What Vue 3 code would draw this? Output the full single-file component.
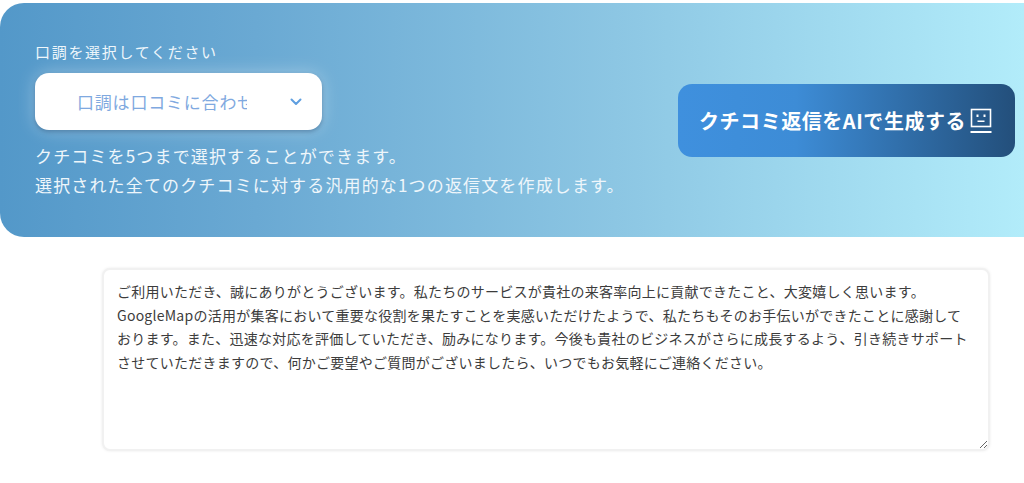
<script setup>
const reply = 'ご利用いただき、誠にありがとうございます。私たちのサービスが貴社の来客率向上に貢献できたこと、大変嬉しく思います。GoogleMapの活用が集客において重要な役割を果たすことを実感いただけたようで、私たちもそのお手伝いができたことに感謝しております。また、迅速な対応を評価していただき、励みになります。今後も貴社のビジネスがさらに成長するよう、引き続きサポートさせていただきますので、何かご要望やご質問がございましたら、いつでもお気軽にご連絡ください。'
</script>

<template>
  <div class="page">
    <section class="banner">
      <div class="left">
        <div class="label">口調を選択してください</div>
        <div class="select">
          <span class="select-text">口調は口コミに合わせる</span>
          <svg class="chevron" viewBox="0 0 12 8" width="12" height="8">
            <path d="M1.5 1.5 6 6l4.500-4.500" fill="none" stroke="#5f9fe0" stroke-width="2" stroke-linecap="round" stroke-linejoin="round" />
          </svg>
        </div>
        <p class="note">クチコミを5つまで選択することができます。<br />選択された全てのクチコミに対する汎用的な1つの返信文を作成します。</p>
      </div>
      <button class="generate" type="button">
        <span>クチコミ返信をAIで生成する</span>
        <svg class="robot" viewBox="0 0 22 26" width="22" height="26">
          <rect x="1.500" y="1.500" width="19" height="17" fill="none" stroke="#fff" stroke-width="1.600" />
          <rect x="6.500" y="6.500" width="2" height="2.500" fill="#fff" />
          <rect x="13.500" y="6.500" width="2" height="2.500" fill="#fff" />
          <rect x="7.500" y="12.500" width="7" height="1.500" fill="#fff" />
          <rect x="0.500" y="23" width="21" height="2" fill="#fff" />
        </svg>
      </button>
    </section>
    <div class="reply-wrap">
      <textarea class="reply" :value="reply"></textarea>
    </div>
  </div>
</template>

<style scoped>
.page {
  width: 1024px;
  height: 483px;
  padding-top: 3px;
  box-sizing: border-box;
  background: #fff;
  overflow: hidden;
  font-family: "Noto Sans CJK JP", "Noto Sans", sans-serif;
}
.banner {
  height: 234px;
  box-sizing: border-box;
  display: flex;
  align-items: flex-start;
  justify-content: space-between;
  padding: 0 9px 0 35px;
  border-radius: 24px 0 0 24px;
  background: linear-gradient(90deg, #5398c9 0%, #6aa9d3 25%, #8cc6e3 60%, #b2ecfa 100%);
}
.left {
  padding-top: 38px;
  color: #fff;
}
.label {
  font-size: 15px;
  line-height: 22px;
  letter-spacing: 1.7px;
  color: #eef6fb;
}
.select {
  width: 287px;
  height: 57px;
  margin-top: 10px;
  box-sizing: border-box;
  padding: 0 20px 0 42px;
  display: flex;
  align-items: center;
  justify-content: space-between;
  border-radius: 14px;
  background: #fff;
  box-shadow: 0 2px 4px rgba(40, 80, 120, 0.45), 0 0 18px rgba(255, 255, 255, 0.35);
}
.select-text {
  width: 170px;
  margin-top: -1px;
  overflow: hidden;
  white-space: nowrap;
  font-size: 17px;
  letter-spacing: 0.8px;
  color: #7fa9e0;
}
.note {
  margin: 11px 0 0;
  font-size: 17px;
  line-height: 29px;
  letter-spacing: 1.15px;
  color: #eef6fb;
  white-space: nowrap;
}
.generate {
  width: 337px;
  height: 73px;
  margin-top: 81px;
  padding: 0 0 0 21px;
  display: flex;
  align-items: center;
  justify-content: flex-start;
  gap: 4px;
  border: 0;
  border-radius: 14px;
  background: linear-gradient(90deg, #3f90de 0%, #3d8cd6 35%, #234f7b 100%);
  color: #fff;
  font-family: inherit;
  font-size: 20px;
  font-weight: 700;
  letter-spacing: 0.55px;
}
.robot {
  flex: none;
}
.reply-wrap {
  padding: 31px 34px 0 102px;
}
.reply {
  display: block;
  width: 888px;
  height: 183px;
  box-sizing: border-box;
  padding: 10px 14px 10px 13px;
  border: 2px solid #f1f1f1;
  border-radius: 8px;
  outline: 0;
  background: #fff;
  color: #3c3c3c;
  font-family: inherit;
  font-size: 14px;
  line-height: 23.7px;
  letter-spacing: 0.25px;
  box-shadow: 0 0 3px rgba(0, 0, 0, 0.08);
}
</style>
